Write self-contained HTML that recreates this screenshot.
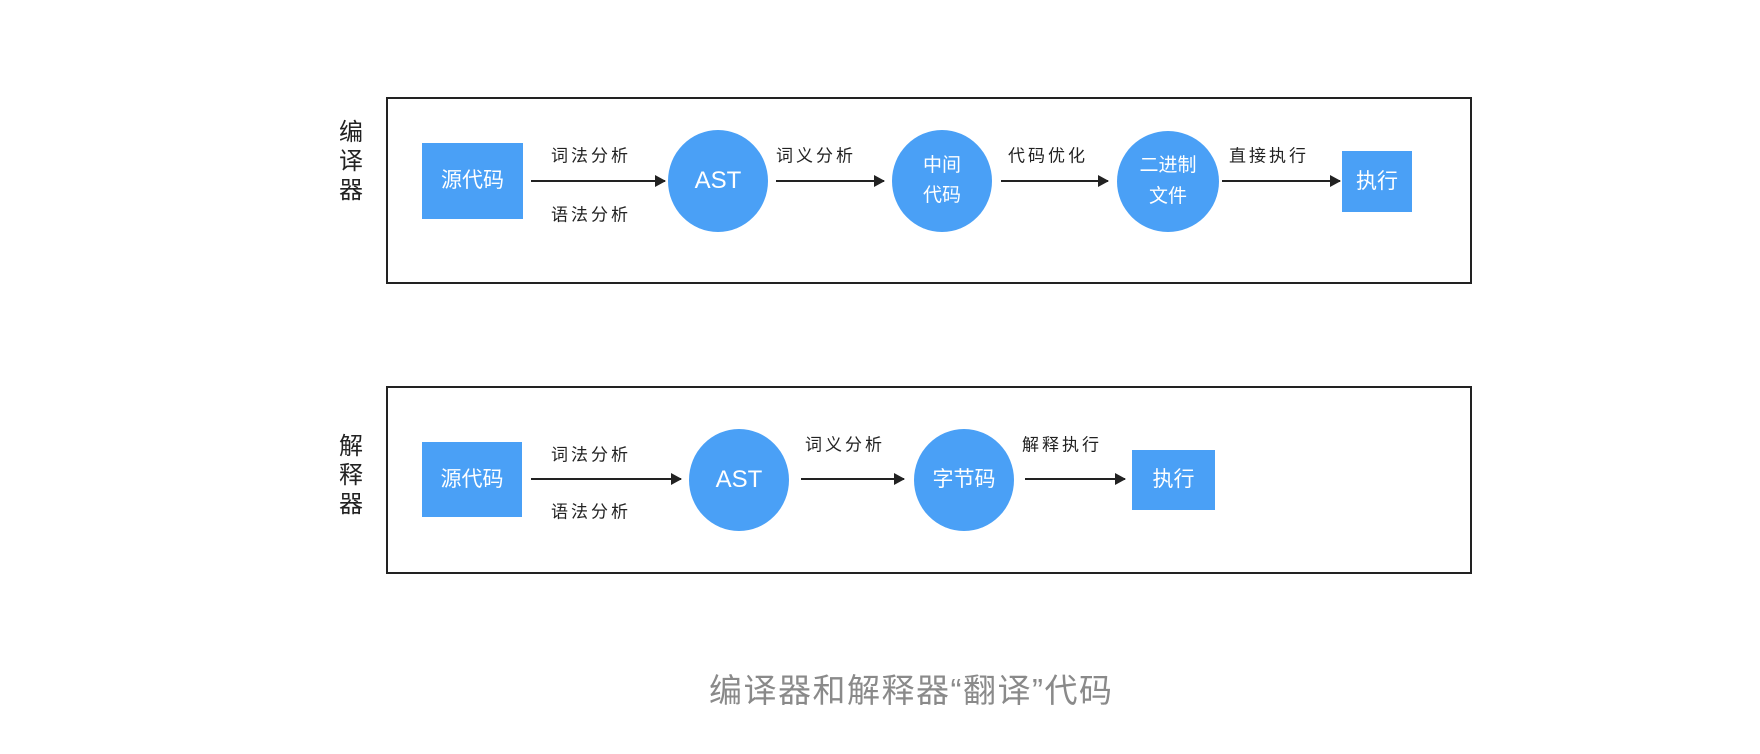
<!DOCTYPE html>
<html><head><meta charset="utf-8"><style>
body{margin:0;width:1760px;height:754px;background:#fff;position:relative;overflow:hidden;font-family:"Liberation Sans","Noto Sans CJK SC",sans-serif;}
.a{position:absolute;}
.box{position:absolute;border:2px solid #222;box-sizing:border-box;}
.r{position:absolute;background:#4aa0f6;color:#fff;display:flex;align-items:center;justify-content:center;font-size:21px;text-align:center;line-height:1.6;}
.c{border-radius:50%;}
.t{position:absolute;font-size:17px;color:#222;letter-spacing:3px;transform:translateY(-50%);white-space:nowrap;}
.lab{position:absolute;font-size:24px;color:#222;width:30px;line-height:29px;text-align:center;}
.ar{position:absolute;height:2px;background:#222;}
.ar:after{content:"";position:absolute;right:-1px;top:-5px;border-left:11px solid #222;border-top:6px solid transparent;border-bottom:6px solid transparent;}
</style></head><body>
<div class="box" style="left:386px;top:97px;width:1086px;height:187px"></div>
<div class="lab" style="left:336px;top:118px">编<br>译<br>器</div>
<div class="r" style="left:422px;top:143px;width:101px;height:76px">源代码</div>
<div class="t" style="left:551px;top:154px">词法分析</div>
<div class="t" style="left:551px;top:213px">语法分析</div>
<div class="ar" style="left:531px;top:180px;width:134px"></div>
<div class="r c" style="left:668px;top:130px;width:100px;height:102px;font-size:24px">AST</div>
<div class="ar" style="left:776px;top:180px;width:108px"></div>
<div class="t" style="left:776px;top:154px">词义分析</div>
<div class="r c" style="left:892px;top:130px;width:100px;height:102px;font-size:19px">中间<br>代码</div>
<div class="ar" style="left:1001px;top:180px;width:107px"></div>
<div class="t" style="left:1008px;top:154px">代码优化</div>
<div class="r c" style="left:1117px;top:131px;width:102px;height:101px;font-size:19px">二进制<br>文件</div>
<div class="ar" style="left:1222px;top:180px;width:118px"></div>
<div class="t" style="left:1229px;top:154px">直接执行</div>
<div class="r" style="left:1342px;top:151px;width:70px;height:61px">执行</div>

<div class="box" style="left:386px;top:386px;width:1086px;height:188px"></div>
<div class="lab" style="left:336px;top:432px">解<br>释<br>器</div>
<div class="r" style="left:422px;top:442px;width:100px;height:75px">源代码</div>
<div class="t" style="left:551px;top:453px">词法分析</div>
<div class="t" style="left:551px;top:510px">语法分析</div>
<div class="ar" style="left:531px;top:478px;width:150px"></div>
<div class="r c" style="left:689px;top:429px;width:100px;height:102px;font-size:24px">AST</div>
<div class="ar" style="left:801px;top:478px;width:103px"></div>
<div class="t" style="left:805px;top:443px">词义分析</div>
<div class="r c" style="left:914px;top:429px;width:100px;height:102px">字节码</div>
<div class="ar" style="left:1025px;top:478px;width:100px"></div>
<div class="t" style="left:1022px;top:443px">解释执行</div>
<div class="r" style="left:1132px;top:450px;width:83px;height:60px">执行</div>

<div class="a" style="left:709px;top:668px;font-size:33px;letter-spacing:1.5px;color:#8a8a8a;line-height:46px;white-space:nowrap">编译器和解释器“翻译”代码</div>
</body></html>
